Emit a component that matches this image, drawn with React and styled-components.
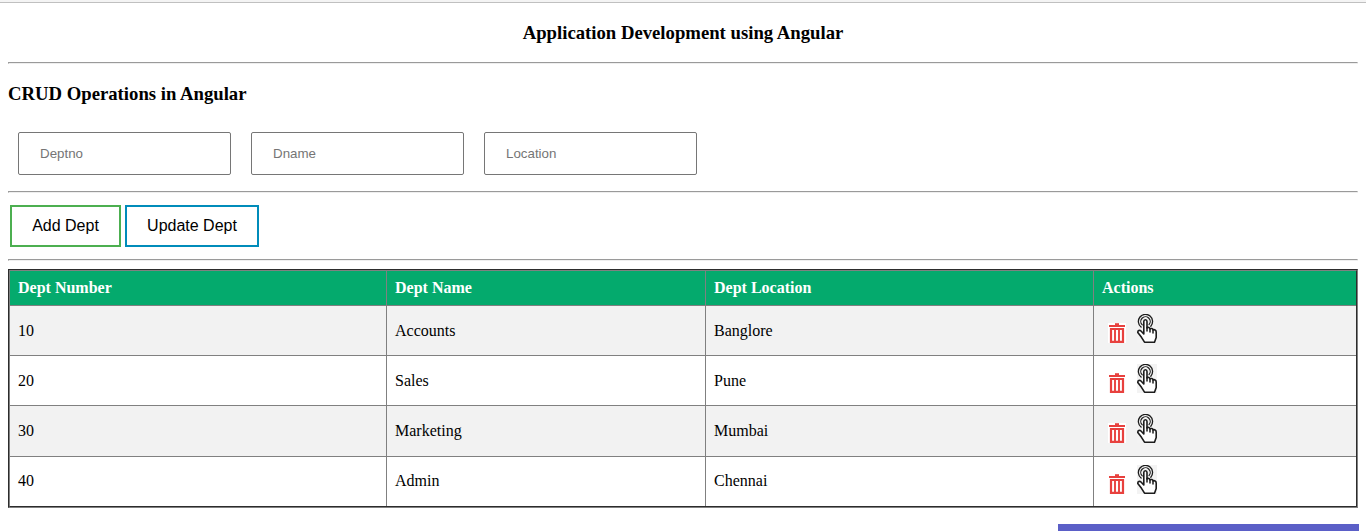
import React from "react";
import styled, { createGlobalStyle } from "styled-components";

const GlobalStyle = createGlobalStyle`
  * { box-sizing: border-box; }
  body { margin: 0; background: #fff; color: #000; font: 16px/18px "Liberation Serif", "Times New Roman", serif; }
`;
const Page = styled.div`
  height: 531px;
  overflow: hidden;
  border-top: 2px solid #f4f4f4;
`;
const Content = styled.main`
  height: 529px;
  display: flex;
  flex-direction: column;
  padding: 0 8px;
  border-top: 1px solid #c0c0c0;
`;
const Title = styled.h3`
  flex: none;
  margin: 0;
  height: 59px;
  padding-top: 19px;
  font-size: 18.72px;
  line-height: 21px;
  text-align: center;
`;
const Subtitle = styled.h3`
  flex: none;
  margin: 0;
  height: 68px;
  padding-top: 19px;
  font-size: 18.72px;
  line-height: 21px;
`;
const Rule = styled.hr`
  flex: none;
  width: 100%;
  margin: 0;
  height: 2px;
  border: 1px solid;
  border-color: #9a9a9a #eee #eee #9a9a9a;
`;
const Fields = styled.div`
  flex: none;
  display: flex;
  gap: 20px;
  height: 59px;
  padding-left: 10px;
`;
const Field = styled.input`
  width: 213px;
  height: 43px;
  padding: 0 21px;
  border: 1px solid #767676;
  border-radius: 2px;
  background: #fff;
  font: 13.333px "Liberation Sans", Arial, sans-serif;
  &::placeholder { color: #757575; opacity: 1; }
`;
const Buttons = styled.div`
  flex: none;
  display: flex;
  gap: 4px;
  height: 66px;
  padding: 12px 0 0 2px;
`;
const Button = styled.button`
  width: ${(p) => p.$width}px;
  height: 42px;
  padding: 0;
  border: 2px solid ${(p) => p.$color};
  background: #fff;
  color: #000;
  font: 16px "Liberation Sans", Arial, sans-serif;
`;
const TableFrame = styled.div`
  flex: none;
  margin-top: 8px;
  border: 1px solid;
  border-color: #2c2c2c #808080 #808080 #2c2c2c;
`;
const Table = styled.table`
  width: 100%;
  table-layout: fixed;
  border-collapse: separate;
  border-spacing: 0;
  border: 1px solid;
  border-color: #808080 #2c2c2c #2c2c2c #808080;
`;
const HeadCell = styled.th`
  height: 35px;
  padding: 0 8px;
  border-right: 1px solid #808080;
  border-bottom: 1px solid #808080;
  background: #04aa6d;
  color: #fff;
  text-align: left;
  &:last-child { border-right: 0; }
`;
const Row = styled.tr`
  height: ${(p) => p.$height}px;
  background: ${(p) => (p.$shaded ? "#f2f2f2" : "#fff")};
  &:last-child td { border-bottom: 0; }
  &:last-child td:not(:last-child) { padding-bottom: 2px; }
`;
const Cell = styled.td`
  padding: 0 8px;
  border-right: 1px solid #808080;
  border-bottom: 1px solid #808080;
  &:last-child { border-right: 0; vertical-align: top; }
`;
const Actions = styled.div`
  display: flex;
  align-items: flex-start;
  gap: 11px;
  padding: 8px 0 0 6px;
`;
const TrashIcon = styled.svg`
  display: block;
  width: 18px;
  height: 20px;
  margin-top: 9px;
  background: #fff;
`;
const TouchIcon = styled.svg`
  display: block;
  width: 20px;
  height: 29px;
  background: #f3f3f3;
`;
const BottomBar = styled.div`
  flex: none;
  align-self: flex-end;
  width: 301px;
  height: 7px;
  margin: 16px -1px 0 0;
  background: #5b5fc7;
`;

const departments = [
  { no: 10, name: "Accounts", location: "Banglore", height: 50 },
  { no: 20, name: "Sales", location: "Pune", height: 50 },
  { no: 30, name: "Marketing", location: "Mumbai", height: 51 },
  { no: 40, name: "Admin", location: "Chennai", height: 49 },
];

const Trash = () => (
  <TrashIcon viewBox="0 0 18 20" fill="none" stroke="#e8413e">
    <path d="M1 3H17" strokeWidth="2" />
    <path d="M7 1.2H11" strokeWidth="2" />
    <path d="M3 6H15V18.8H3Z" strokeWidth="2.2" />
    <path d="M7 6V19M11 6V19" strokeWidth="1.9" />
  </TrashIcon>
);

const Touch = () => (
  <TouchIcon viewBox="0 0 20 29" fill="none" stroke="#1c1c1c" strokeLinecap="round" strokeLinejoin="round">
    <path d="M4.1 13.1A7.1 7.1 0 1 1 13.8 12.2" strokeWidth="1.3" />
    <path d="M5.3 10.9A4.7 4.7 0 1 1 12 10.6" strokeWidth="1.2" />
    <path d="M6.8 18V7.5C6.8 5.2 10 5.2 10 7.5V14C10.8 13 13 13.3 13 15C14 14.1 16 14.4 16 16C17.2 15.2 19.2 16 19.2 18V23.5L17.5 28.2H7.5L4.5 23.3L.8 18.4C.7 16.5 2.5 15.7 4 17L6.8 20V18" fill="#fff" strokeWidth="1.6" />
    <path d="M10 13.5V17M13 15V18M16 16V19" strokeWidth="1.5" />
  </TouchIcon>
);

export default function App() {
  return (
    <Page>
      <GlobalStyle />
      <Content>
        <Title>Application Development using Angular</Title>
        <Rule />
        <Subtitle>CRUD Operations in Angular</Subtitle>
        <Fields>
          <Field placeholder="Deptno" />
          <Field placeholder="Dname" />
          <Field placeholder="Location" />
        </Fields>
        <Rule />
        <Buttons>
          <Button $width={111} $color="#4caf50">Add Dept</Button>
          <Button $width={134} $color="#008cba">Update Dept</Button>
        </Buttons>
        <Rule />
        <TableFrame>
          <Table>
            <colgroup>
              <col style={{ width: 377 }} />
              <col style={{ width: 319 }} />
              <col style={{ width: 388 }} />
              <col />
            </colgroup>
            <thead>
              <tr>
                <HeadCell>Dept Number</HeadCell>
                <HeadCell>Dept Name</HeadCell>
                <HeadCell>Dept Location</HeadCell>
                <HeadCell>Actions</HeadCell>
              </tr>
            </thead>
            <tbody>
              {departments.map((d, i) => (
                <Row key={d.no} $height={d.height} $shaded={i % 2 === 0}>
                  <Cell>{d.no}</Cell>
                  <Cell>{d.name}</Cell>
                  <Cell>{d.location}</Cell>
                  <Cell>
                    <Actions>
                      <Trash />
                      <Touch />
                    </Actions>
                  </Cell>
                </Row>
              ))}
            </tbody>
          </Table>
        </TableFrame>
        <BottomBar />
      </Content>
    </Page>
  );
}
